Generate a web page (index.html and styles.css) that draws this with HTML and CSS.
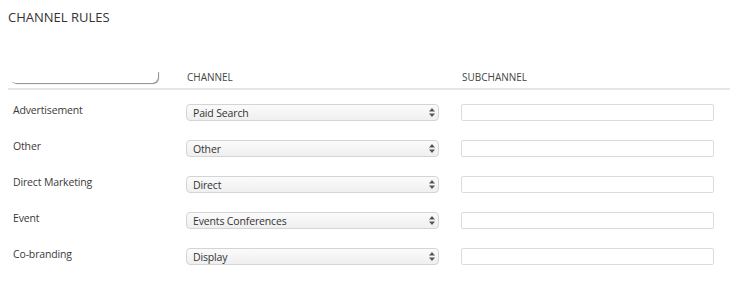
FILE: index.html
```html
<!DOCTYPE html>
<html lang="en">
<head>
<meta charset="UTF-8">
<title>Channel Rules</title>
<link rel="stylesheet" href="styles.css">
</head>
<body>

<h1 class="title">CHANNEL RULES</h1>

<div class="rules">
  <div class="head">
    <div class="cell"><input class="filter" type="text"></div>
    <div class="cell">CHANNEL</div>
    <div class="cell">SUBCHANNEL</div>
  </div>

  <div class="list">
    <div class="row">
      <div class="label">Advertisement</div>
      <div class="pick"><select><option>Paid Search</option></select><svg class="arr" width="6" height="9" viewBox="0 0 6 9"><path d="M3 0L6 3.5H0Z M3 9L0 5.5H6Z" fill="#555"/></svg></div>
      <div><input class="sub" type="text"></div>
    </div>
    <div class="row">
      <div class="label">Other</div>
      <div class="pick"><select><option>Other</option></select><svg class="arr" width="6" height="9" viewBox="0 0 6 9"><path d="M3 0L6 3.5H0Z M3 9L0 5.5H6Z" fill="#555"/></svg></div>
      <div><input class="sub" type="text"></div>
    </div>
    <div class="row">
      <div class="label">Direct Marketing</div>
      <div class="pick"><select><option>Direct</option></select><svg class="arr" width="6" height="9" viewBox="0 0 6 9"><path d="M3 0L6 3.5H0Z M3 9L0 5.5H6Z" fill="#555"/></svg></div>
      <div><input class="sub" type="text"></div>
    </div>
    <div class="row">
      <div class="label">Event</div>
      <div class="pick"><select><option>Events Conferences</option></select><svg class="arr" width="6" height="9" viewBox="0 0 6 9"><path d="M3 0L6 3.5H0Z M3 9L0 5.5H6Z" fill="#555"/></svg></div>
      <div><input class="sub" type="text"></div>
    </div>
    <div class="row">
      <div class="label">Co-branding</div>
      <div class="pick"><select><option>Display</option></select><svg class="arr" width="6" height="9" viewBox="0 0 6 9"><path d="M3 0L6 3.5H0Z M3 9L0 5.5H6Z" fill="#555"/></svg></div>
      <div><input class="sub" type="text"></div>
    </div>
  </div>
</div>

</body>
</html>
```

FILE: styles.css
```css
body {
  font-family: "Open Sans", Arial, sans-serif;
  color: #444;
  margin: 0;
  padding: 8px;
  background: #fff;
}
.title {
  font-size: 13px; font-weight: normal;
  color: #333;
  margin: 0; line-height: 18px;
}
.rules { width: 722px; margin-top: 41px; }
.head, .row {
  display: grid;
  grid-template-columns: 178px 275px 1fr;
}
.head {
  font-size: 10px; color: #444;
  height: 21px; box-sizing: content-box;
  align-items: center;
  border-bottom: 2px solid #e6e6e6;
}
.head .cell { margin-top: -2px; }
.head .cell:nth-child(2), .head .cell:nth-child(3) { padding-left: 1px; }
.filter {
  display: block;
  width: 148px; height: 12px;
  margin: 0 0 0 2px; padding: 0;
  border: none; outline: none;
  border-radius: 0 0 6px 6px;
  box-shadow: 1px 1px 1px rgba(0,0,0,.45);
  background: #fff;
}
.list { padding-top: 14px; }
.row {
  height: 36px;
  font-size: 10.5px;
  letter-spacing: -0.15px;
}
.label { padding: 0 0 0 5px; line-height: 12px; color: #3a3a3a; }
.pick { position: relative; width: 253px; }
.pick select {
  -webkit-appearance: none; appearance: none;
  display: block; width: 253px; height: 17px;
  margin: 0; padding: 0 0 0 6px;
  font: 10.5px "Open Sans", Arial, sans-serif;
  letter-spacing: -0.15px;
  color: #333;
  border: 1px solid #d4d4d4; border-radius: 4px;
  background: linear-gradient(#fbfbfb, #efefef);
}
.arr { position: absolute; right: 4px; top: 4px; }
.sub {
  display: block;
  width: 253px; height: 17px;
  margin: 0; padding: 0;
  box-sizing: border-box;
  border: 1px solid #dcdcdc; border-radius: 2px;
  background: #fff;
}
```
